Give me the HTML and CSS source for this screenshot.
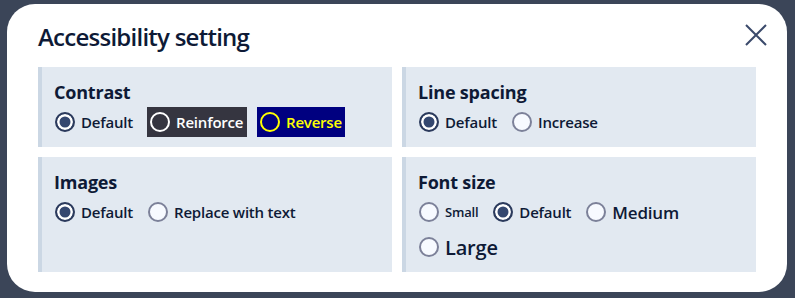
FILE: index.html
```html
<!DOCTYPE html>
<html lang="en">
<head>
<meta charset="utf-8">
<title>Accessibility setting</title>
<link rel="stylesheet" href="styles.css">
</head>
<body>
<div class="backdrop">
  <div class="dialog" role="dialog" aria-labelledby="dlg-title">
    <div class="dialog-header">
      <h1 id="dlg-title" class="dialog-title">Accessibility setting</h1>
      <button class="close-btn" aria-label="Close">
        <svg width="24" height="24" viewBox="0 0 24 24"><path d="M2 2 L22 22 M22 2 L2 22" stroke="#3b4a6b" stroke-width="2" fill="none"/></svg>
      </button>
    </div>
    <div class="settings-grid">
      <section class="setting-box">
        <h2 class="setting-title">Contrast</h2>
        <div class="options">
          <label class="option"><input type="radio" name="contrast" checked><span>Default</span></label>
          <label class="option option-reinforce"><input type="radio" name="contrast"><span>Reinforce</span></label>
          <label class="option option-reverse"><input type="radio" name="contrast"><span>Reverse</span></label>
        </div>
      </section>
      <section class="setting-box">
        <h2 class="setting-title">Line spacing</h2>
        <div class="options">
          <label class="option"><input type="radio" name="spacing" checked><span>Default</span></label>
          <label class="option"><input type="radio" name="spacing"><span>Increase</span></label>
        </div>
      </section>
      <section class="setting-box">
        <h2 class="setting-title">Images</h2>
        <div class="options">
          <label class="option"><input type="radio" name="images" checked><span>Default</span></label>
          <label class="option"><input type="radio" name="images"><span>Replace with text</span></label>
        </div>
      </section>
      <section class="setting-box">
        <h2 class="setting-title">Font size</h2>
        <div class="options">
          <label class="option size-small"><input type="radio" name="fontsize"><span>Small</span></label>
          <label class="option"><input type="radio" name="fontsize" checked><span>Default</span></label>
          <label class="option size-medium"><input type="radio" name="fontsize"><span>Medium</span></label>
          <label class="option size-large"><input type="radio" name="fontsize"><span>Large</span></label>
        </div>
      </section>
    </div>
  </div>
</div>
</body>
</html>
```

FILE: styles.css
```css
html, body {
  margin: 0;
  padding: 0;
}
body {
  background: #3b4558;
  font-family: "Open Sans", "Liberation Sans", sans-serif;
  color: #0e1a36;
}
.backdrop {
  padding: 4px 8px 6px 7px;
}
.dialog {
  background: #ffffff;
  border-radius: 28px;
  width: 780px;
  box-sizing: border-box;
  padding: 17px 31px 20px 31px;
}
.dialog-header {
  display: flex;
  justify-content: space-between;
  align-items: flex-start;
  margin-bottom: 14px;
}
.dialog-title {
  margin: 0;
  font-size: 24px;
  line-height: 32px;
  font-weight: 600;
  letter-spacing: -0.75px;
  color: #0e1a36;
}
.close-btn {
  margin: 2px -12px 0 0;
  padding: 0;
  border: 0;
  background: transparent;
  width: 24px;
  height: 24px;
  cursor: pointer;
}
.close-btn svg {
  display: block;
}
.settings-grid {
  display: grid;
  grid-template-columns: 1fr 1fr;
  gap: 10px;
}
.setting-box {
  background: #e2e9f1;
  border-left: 4px solid #cbd7e4;
  padding: 13px 12px 10px 12px;
}
.setting-title {
  margin: 0 0 3px 0;
  font-size: 18px;
  line-height: 24px;
  font-weight: 700;
  letter-spacing: -0.2px;
}
.options {
  display: flex;
  flex-wrap: wrap;
  column-gap: 14px;
  row-gap: 5px;
}
.option {
  display: inline-flex;
  align-items: center;
  gap: 6px;
  height: 30px;
  font-size: 15px;
  font-weight: 600;
  letter-spacing: -0.2px;
  cursor: pointer;
}
.option input {
  appearance: none;
  -webkit-appearance: none;
  margin: 0 0 0 1px;
  width: 20px;
  height: 20px;
  border-radius: 50%;
  border: 2px solid #7c8199;
  background: #f7faff;
  box-sizing: border-box;
  flex: none;
}
.option input:checked {
  border-color: #2b3a5c;
  background: #34476f;
  box-shadow: inset 0 0 0 2.5px #ffffff;
}
.option-reinforce {
  background: #353540;
  color: #ffffff;
  padding: 0 5px 0 2px;
  width: 100px;
  box-sizing: border-box;
}
.option-reinforce input {
  background: transparent;
  border-color: #ffffff;
}
.option-reverse {
  background: #000080;
  color: #ffff00;
  padding: 0 3px 0 2px;
  width: 88px;
  box-sizing: border-box;
  margin-left: -4px;
}
.option-reverse input {
  background: transparent;
  border-color: #ffff00;
}
.size-small span {
  font-size: 13px;
}
.size-medium span {
  font-size: 17px;
}
.size-large span {
  font-size: 20px;
}
```
